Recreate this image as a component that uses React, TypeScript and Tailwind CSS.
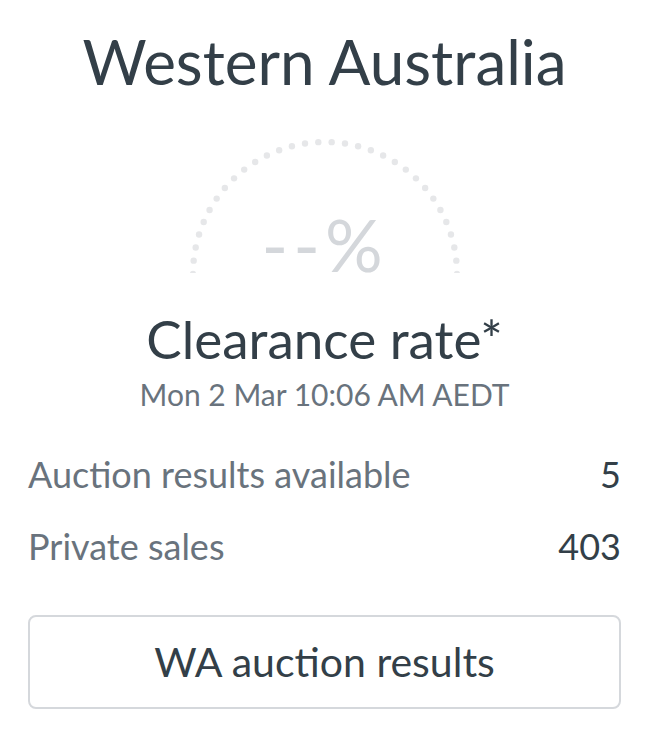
const DOTS = 31;
const R = 132;
const CX = 145;
const CY = 137;

function Gauge() {
  const dots = Array.from({ length: DOTS + 1 }, (_, i) => {
    const a = Math.PI - (i * Math.PI) / DOTS;
    return { x: CX + R * Math.cos(a), y: CY - R * Math.sin(a) };
  });

  return (
    <div className="relative mx-auto mt-[40px] h-[136px] w-[290px]">
      <svg className="absolute inset-0 overflow-hidden" width="290" height="136" viewBox="0 0 290 136">
        {dots.map((d, i) => (
          <circle key={i} cx={d.x} cy={d.y} r="3.2" fill="#e6e7e9" />
        ))}
      </svg>
      <div className="absolute inset-x-0 top-[64px] text-center text-[72px] leading-[86px] tracking-[5px] text-[#d4d7db]">
        --%
      </div>
    </div>
  );
}

function StatRow({ label, value }: { label: string; value: string }) {
  return (
    <div className="flex items-center justify-between text-[36px] leading-[72px]">
      <span className="text-[#69737d]">{label}</span>
      <span className="text-[#333f48]">{value}</span>
    </div>
  );
}

export default function App() {
  return (
    <div className="min-h-screen bg-white px-[28px] pt-[25px] font-['Lato',sans-serif] text-[#333f48]">
      <h1 className="text-center text-[62px] leading-[72px]">Western Australia</h1>
      <Gauge />
      <div className="mt-[36px] text-center text-[53px] leading-[60px]">Clearance rate*</div>
      <div className="mt-[5px] text-center text-[30px] leading-[40px] text-[#69737d]">Mon 2 Mar 10:06 AM AEDT</div>
      <div className="mt-[24px]">
        <StatRow label="Auction results available" value="5" />
        <StatRow label="Private sales" value="403" />
      </div>
      <button className="mt-[33px] flex h-[94px] w-full items-center justify-center rounded-[8px] border-2 border-[#d5d8dc] bg-white text-[41px] text-[#333f48]">
        WA auction results
      </button>
    </div>
  );
}
